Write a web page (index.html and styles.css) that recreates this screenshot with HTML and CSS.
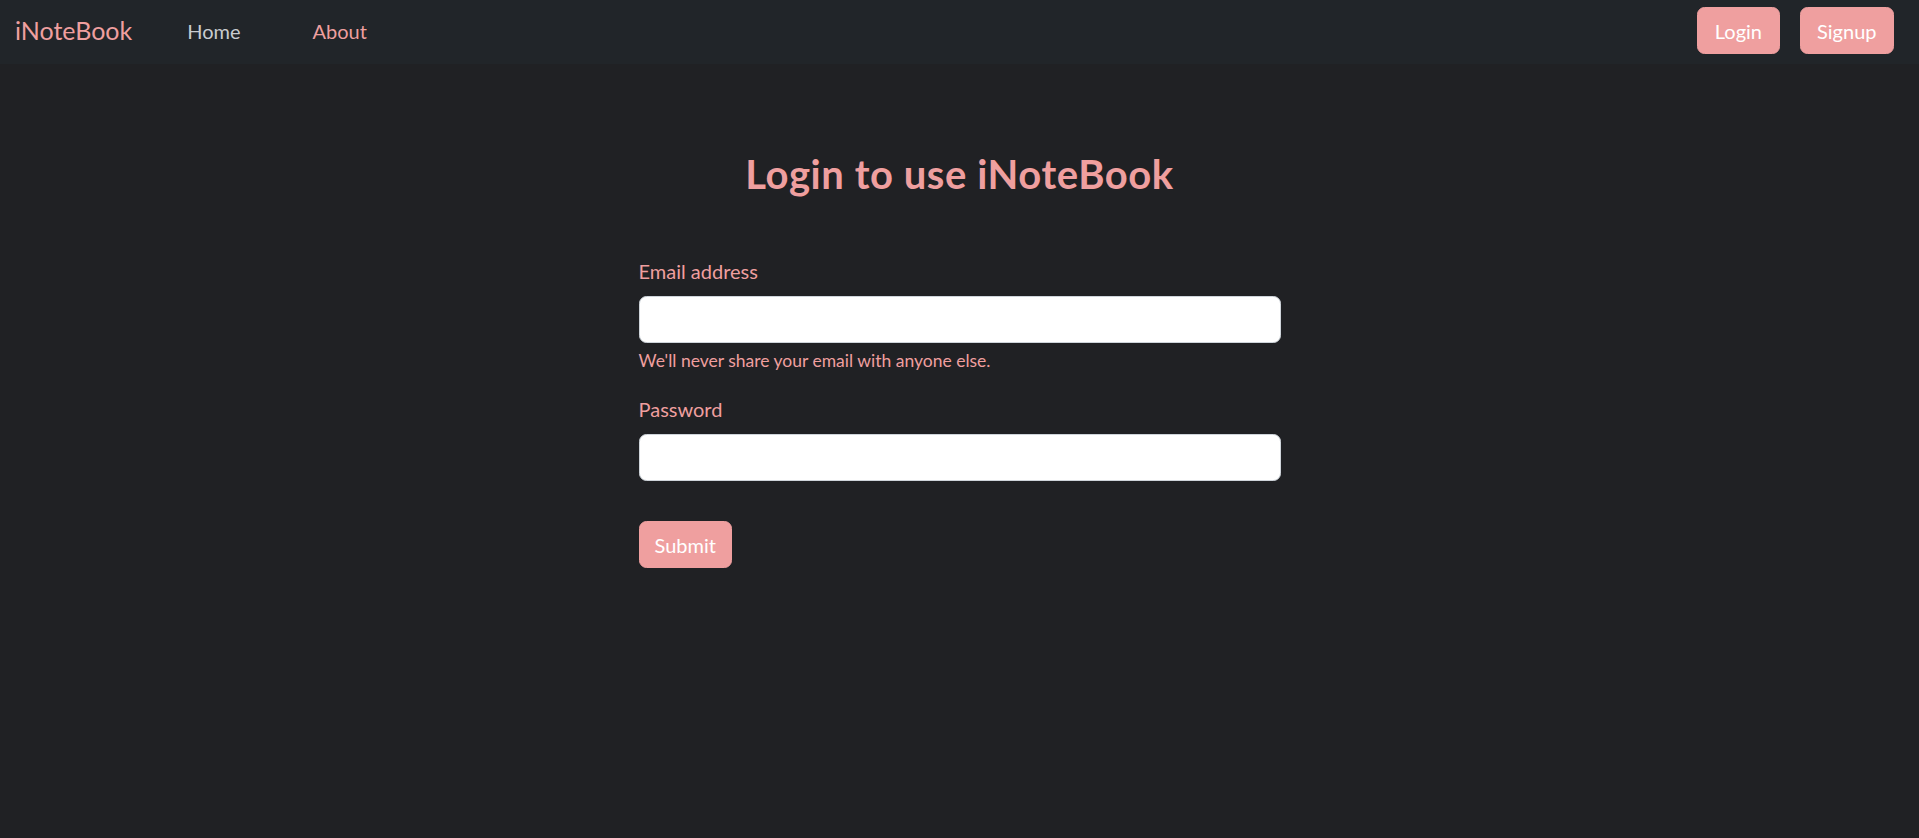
FILE: index.html
```html
<!DOCTYPE html>
<html lang="en">
<head>
<meta charset="utf-8">
<title>iNoteBook</title>
<link rel="stylesheet" href="styles.css">
</head>
<body>
<nav class="navbar">
  <a class="brand" href="#">iNoteBook</a>
  <ul class="nav-links">
    <li><a class="nav-link home" href="#">Home</a></li>
    <li><a class="nav-link about" href="#">About</a></li>
  </ul>
  <div class="nav-actions">
    <a class="btn" href="#">Login</a>
    <a class="btn" href="#">Signup</a>
  </div>
</nav>
<main class="container">
  <h2 class="title">Login to use iNoteBook</h2>
  <form class="login-form">
    <div class="field">
      <label class="label" for="email">Email address</label>
      <input class="input" type="email" id="email">
      <div class="help">We'll never share your email with anyone else.</div>
    </div>
    <div class="field field-last">
      <label class="label" for="password">Password</label>
      <input class="input" type="password" id="password">
    </div>
    <button class="btn submit" type="submit">Submit</button>
  </form>
</main>
</body>
</html>
```

FILE: styles.css
```css
* { box-sizing: border-box; }
html, body { margin: 0; padding: 0; }
body {
  background: #202124;
  font-family: Lato, "Open Sans", sans-serif;
  color: #ef9f9f;
  font-size: 20px;
  line-height: 1.5;
}
a { text-decoration: none; }
.navbar {
  display: flex;
  align-items: center;
  height: 64px;
  padding: 7px 25px 10px 15px;
  background: #212529;
}
.brand {
  color: #ef9f9f;
  font-size: 25px;
  line-height: 1.5;
}
.nav-links {
  display: flex;
  list-style: none;
  margin: 0 0 0 55px;
  padding: 0;
  gap: 72px;
}
.nav-link {
  font-size: 20px;
  line-height: 1.5;
}
.nav-link.home { color: #c9ccd0; }
.nav-link.about { color: #ef9f9f; }
.nav-actions {
  margin-left: auto;
  display: flex;
  gap: 20px;
}
.btn {
  display: inline-block;
  background: #ef9f9f;
  color: #fff;
  border: 1px solid #ef9f9f;
  border-radius: 7.5px;
  font-family: inherit;
  font-size: 20px;
  line-height: 1.5;
  padding: 7.5px 16.5px;
  height: 47px;
}
.container {
  width: 642px;
  margin: 0 auto;
  padding-top: 86px;
}
.title {
  margin: 0 0 58px;
  text-align: center;
  font-size: 40px;
  font-weight: 700;
  letter-spacing: 0.55px;
  line-height: 1.2;
  color: #ef9f9f;
}
.field { margin-bottom: 20px; }
.field-last { margin-bottom: 40px; }
.label {
  display: block;
  margin-bottom: 10px;
  font-size: 20px;
  line-height: 1.5;
}
.input {
  display: block;
  width: 100%;
  height: 47px;
  border: 1px solid #ced4da;
  border-radius: 7.5px;
  background: #fff;
  font-size: 20px;
  padding: 7.5px 15px;
}
.help {
  margin-top: 5px;
  font-size: 17.5px;
  line-height: 1.5;
}
.submit {
  padding: 7.5px 15px;
  cursor: pointer;
}
```
